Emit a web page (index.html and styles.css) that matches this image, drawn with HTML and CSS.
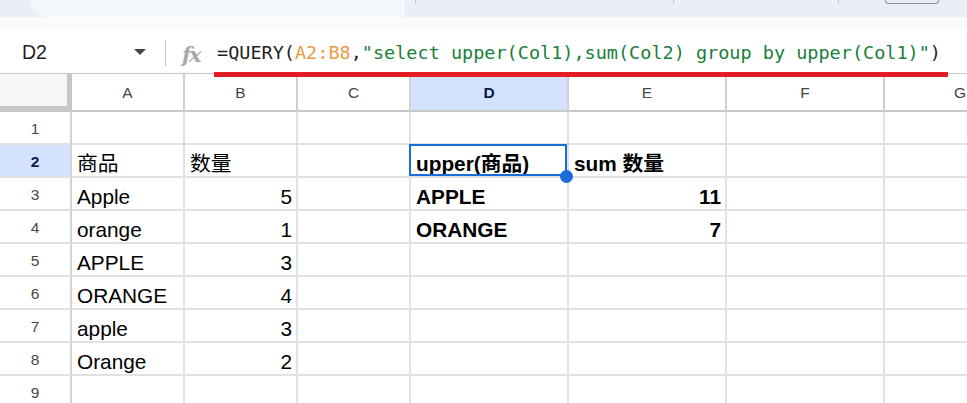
FILE: index.html
```html
<!DOCTYPE html>
<html lang="zh">
<head>
    <meta charset="UTF-8">
    <meta name="viewport" content="width=device-width, initial-scale=1.0">
    <title>QUERY - 表格</title>
    <link rel="stylesheet" href="styles.css">
</head>
<body>
    <div class="app">
        <!-- barre d'outils (coupée en haut) -->
        <div class="top">
            <div class="toolbar">
                <div class="menu-search"></div>
                <span class="tb-sep first"></span>
                <span class="tb-sep second"></span>
                <span class="tb-sep third"></span>
                <span class="tb-box"></span>
            </div>
        </div>

        <!-- barre de formule -->
        <div class="formula-bar">
            <div class="name-box">D2</div>
            <span class="caret"></span>
            <span class="fb-divider"></span>
            <span class="fx">fx</span>
            <div class="formula">=QUERY(<span class="ref">A2:B8</span>,<span class="str">"select upper(Col1),sum(Col2) group by upper(Col1)"</span>)</div>
        </div>
        <div class="mark"></div>

        <!-- grille -->
        <div class="sheet">
            <div class="corner"></div>
            <div class="col-head">A</div>
            <div class="col-head">B</div>
            <div class="col-head">C</div>
            <div class="col-head active">D</div>
            <div class="col-head">E</div>
            <div class="col-head">F</div>
            <div class="col-head last">G</div>

            <div class="row-head">1</div>
            <div class="cell"></div><div class="cell"></div><div class="cell"></div>
            <div class="cell"></div><div class="cell"></div><div class="cell"></div><div class="cell"></div>

            <div class="row-head active">2</div>
            <div class="cell">商品</div>
            <div class="cell">数量</div>
            <div class="cell"></div>
            <div class="cell bold selected">upper(商品)</div>
            <div class="cell bold">sum 数量</div>
            <div class="cell"></div><div class="cell"></div>

            <div class="row-head">3</div>
            <div class="cell">Apple</div>
            <div class="cell num">5</div>
            <div class="cell"></div>
            <div class="cell bold">APPLE</div>
            <div class="cell bold num">11</div>
            <div class="cell"></div><div class="cell"></div>

            <div class="row-head">4</div>
            <div class="cell">orange</div>
            <div class="cell num">1</div>
            <div class="cell"></div>
            <div class="cell bold">ORANGE</div>
            <div class="cell bold num">7</div>
            <div class="cell"></div><div class="cell"></div>

            <div class="row-head">5</div>
            <div class="cell">APPLE</div>
            <div class="cell num">3</div>
            <div class="cell"></div><div class="cell"></div><div class="cell"></div><div class="cell"></div><div class="cell"></div>

            <div class="row-head">6</div>
            <div class="cell">ORANGE</div>
            <div class="cell num">4</div>
            <div class="cell"></div><div class="cell"></div><div class="cell"></div><div class="cell"></div><div class="cell"></div>

            <div class="row-head">7</div>
            <div class="cell">apple</div>
            <div class="cell num">3</div>
            <div class="cell"></div><div class="cell"></div><div class="cell"></div><div class="cell"></div><div class="cell"></div>

            <div class="row-head">8</div>
            <div class="cell">Orange</div>
            <div class="cell num">2</div>
            <div class="cell"></div><div class="cell"></div><div class="cell"></div><div class="cell"></div><div class="cell"></div>

            <div class="row-head">9</div>
            <div class="cell"></div><div class="cell"></div><div class="cell"></div>
            <div class="cell"></div><div class="cell"></div><div class="cell"></div><div class="cell"></div>
        </div>
    </div>
</body>
</html>
```

FILE: styles.css
```css
/* Feuille de calcul */
body {
    margin: 0;
    font-family: "Liberation Sans", Arial, "Noto Sans CJK SC", sans-serif;
    background-color: #fff;
    color: #000;
    overflow: hidden;
}

.app {
    position: relative;
    width: 967px;
    height: 403px;
    overflow: hidden;
}

/* Barre d'outils */
.top {
    height: 30px;
    background-color: #f9fbfd;
}

.toolbar {
    display: flex;
    align-items: flex-start;
    height: 17px;
    background-color: #eaeef5;
    padding-left: 30px;
}

.menu-search {
    width: 375px;
    height: 17px;
    background-color: #f3f6fb;
    border-radius: 0 0 0 18px;
}

.tb-sep {
    width: 1px;
    height: 4px;
    background-color: #c4c7c5;
}

.tb-sep.first { margin-left: 10px; }
.tb-sep.second { margin-left: 257px; }
.tb-sep.third { margin-left: 164px; }

.tb-box {
    margin-left: 46px;
    width: 52px;
    height: 3px;
    border: 1px solid #8e918f;
    border-top: none;
    border-radius: 0 0 5px 5px;
}

/* Barre de formule */
.formula-bar {
    display: flex;
    align-items: center;
    height: 43px;
    background-color: #fff;
    border-bottom: 1px solid #c4c7c5;
}

.name-box {
    width: 134px;
    box-sizing: border-box;
    padding-left: 22px;
    padding-top: 1px;
    font-size: 19.5px;
    color: #1f1f1f;
}

.caret {
    width: 0;
    height: 0;
    margin-top: 1px;
    border-left: 6px solid transparent;
    border-right: 6px solid transparent;
    border-top: 6px solid #444746;
}

.fb-divider {
    width: 1px;
    height: 26px;
    margin-left: 19px;
    margin-top: 3px;
    background-color: #c7c7c7;
}

.fx {
    width: 23px;
    margin-left: 16px;
    margin-top: 5px;
    font-family: "DejaVu Serif", serif;
    font-style: italic;
    font-weight: bold;
    font-size: 21px;
    letter-spacing: -2px;
    color: #a5a8ab;
}

.formula {
    margin-left: 12px;
    margin-top: 2px;
    font-family: "DejaVu Sans Mono", monospace;
    font-size: 18.5px;
    white-space: pre;
    color: #1f1f1f;
}

.formula .ref {
    color: #eb9b3f;
}

.formula .str {
    color: #188038;
}

/* trait rouge sous la formule */
.mark {
    position: absolute;
    top: 72px;
    left: 214px;
    width: 734px;
    height: 5px;
    background-color: #e31d23;
    z-index: 5;
}

/* Grille */
.sheet {
    display: grid;
    grid-template-columns: 72px 113px 113px 113px 158px 158px 158px 158px;
    grid-template-rows: 38px repeat(9, 33px);
}

.corner {
    background-color: #f5f6f7;
    border-right: 5px solid #c4c7c5;
    border-bottom: 6px solid #c4c7c5;
}

.col-head {
    display: flex;
    align-items: center;
    justify-content: center;
    padding-top: 2px;
    box-sizing: border-box;
    border-right: 2px solid #d0d0d0;
    border-bottom: 2px solid #c7c7c7;
    font-size: 15.5px;
    color: #444746;
}

/* la colonne G est coupée par le bord */
.col-head.last {
    justify-content: flex-start;
    padding-left: 69px;
}

.row-head {
    display: flex;
    align-items: center;
    justify-content: center;
    padding-top: 3px;
    box-sizing: border-box;
    border-right: 2px solid #d3d3d3;
    border-bottom: 2px solid #e1e1e1;
    font-size: 15.5px;
    color: #444746;
}

.col-head.active,
.row-head.active {
    background-color: #d3e3fd;
    color: #041e49;
    font-weight: bold;
}

.cell {
    position: relative;
    display: flex;
    align-items: flex-end;
    box-sizing: border-box;
    padding: 0 4px 1px 5px;
    border-right: 2px solid #e1e1e1;
    border-bottom: 2px solid #e1e1e1;
    font-size: 20.8px;
    line-height: 23px;
    white-space: nowrap;
}

.num {
    justify-content: flex-end;
}

.bold {
    font-weight: bold;
}

/* cellule active */
.selected::before {
    content: "";
    position: absolute;
    left: -2px;
    top: -1px;
    right: 0;
    bottom: 0;
    border: 2px solid #1a6dd9;
    z-index: 2;
}

.selected::after {
    content: "";
    position: absolute;
    right: -6px;
    bottom: -7px;
    width: 13px;
    height: 13px;
    border-radius: 50%;
    background-color: #1a6dd9;
    z-index: 3;
}
```
